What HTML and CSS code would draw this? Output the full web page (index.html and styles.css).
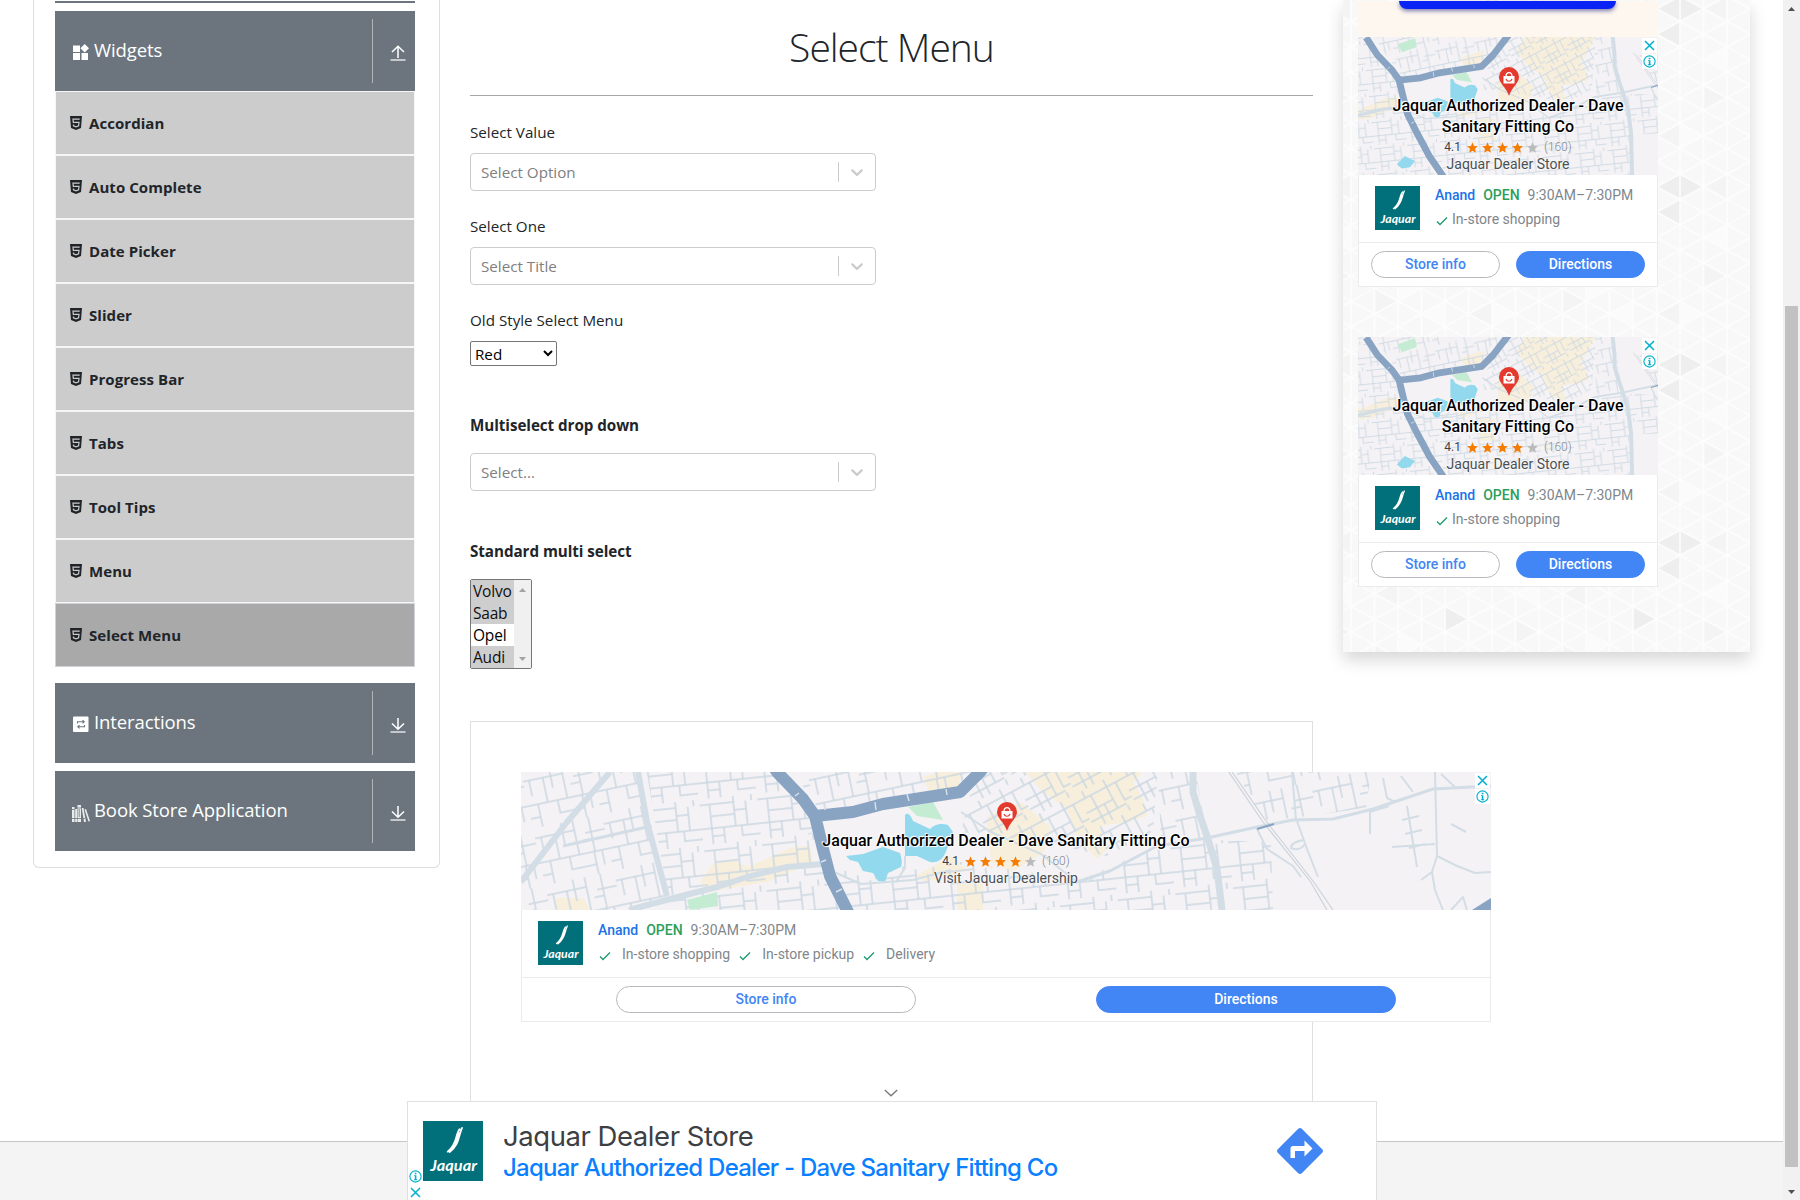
FILE: index.html
```
<!DOCTYPE html>
<html lang="en">
<head>
<meta charset="utf-8">
<title>Select Menu</title>
<link rel="stylesheet" href="styles.css">
</head>
<body>
<svg class="defs" width="0" height="0">
  <defs>
    <pattern id="st1" width="70" height="58" patternUnits="userSpaceOnUse" patternTransform="rotate(-12)"><path class="street" d="M0 10H40M40 0V35M0 35H70M20 10V35M55 35V58M10 35V58M50 15H70M56 0V35M30 35V48H55M0 48H10M28 0V22M6 10V26M46 22H56M63 35V50"/></pattern>
    <pattern id="st2" width="48" height="40" patternUnits="userSpaceOnUse" patternTransform="rotate(-28)"><path class="street" d="M0 8H48M0 22H30M12 8V40M30 0V32M40 8V28H48M0 32H40M20 22V40M6 0V8M40 34V40"/></pattern>
    <pattern id="st3" width="58" height="46" patternUnits="userSpaceOnUse" patternTransform="rotate(-6)"><path class="street" d="M0 6H34M10 6V46M34 0V30M10 18H34M0 30H58M46 6V30M34 14H46M22 30V46M40 30V40H58M10 38H22M52 0V6"/></pattern>
    <g id="map-art">
      <rect x="0" y="-60" width="970" height="300" fill="#f4f2f4"/>
      <g fill="#f7efdc">
        <path d="M192 92L212 87L226 95L252 84L272 75L289 74L292 90L246 110L186 120L179 110Z"/>
        <path d="M516 -35L640 -35L622 0L612 10L622 27L626 44L606 50L579 54L586 77L576 87L556 64L546 37L522 20L500 -5Z"/>
        <path d="M466 45L500 30L530 55L523 80L490 100L470 90Z"/>
        <path d="M402 5L444 -8L436 18L408 20Z"/><path d="M395 104L430 84L446 98L405 110Z"/><path d="M436 112H462V150H436Z"/><path d="M35 126H62L70 138H35Z"/>
      </g>
      <path fill="url(#st1)" d="M0 0H119L146 125L112 138H0Z"/>
      <path fill="url(#st3)" d="M119 -40H230L292 42L304 92L330 150L360 220H150L146 120Z"/>
      <path fill="url(#st1)" d="M240 -45H480L450 16L300 40Z"/>
      <path fill="url(#st2)" d="M486 -45H640L632 60L586 84L520 70L440 60L450 20Z"/>
      <path fill="url(#st3)" d="M310 100L440 90L560 108L640 72L686 68L701 138L704 220H370Z"/>
      <path fill="url(#st3)" d="M692 68L750 70L752 138H702Z"/>
      <path fill="url(#st1)" d="M635 -40H668L686 65L640 70Z"/>
      <path fill="url(#st1)" d="M715 0H850L845 36L772 46L742 48Z"/>
      <g fill="#c3ecd2"><path d="M387 35L412 30L422 48L396 44Z"/><path d="M166 128L196 120L197 134L169 138Z"/><path d="M292 -19L322 -30L325 -14L299 -5Z"/></g>
      <g fill="#92d9ee">
        <path d="M384 43Q388 39 392 49L409 57Q416 50 427 53L432 60L426 77Q421 92 409 90L396 84L384 84Z"/>
        <path d="M325 84L342 82L362 75L379 81Q382 90 380 95L367 101L364 110L357 109L352 101L342 99L337 90L329 88Z"/>
        <path d="M290 192L304 177L322 186L313 197L299 199Z"/>
      </g>
      <g fill="none" stroke="#d3dde6" stroke-linejoin="round">
        <path stroke-width="6" d="M89 0L46 50L0 110M117 0L126 50L146 124M108 138L149 127L196 115L226 105L266 95L302 92"/>
        <path stroke-width="7" d="M668 -40L672 0L672 20L679 44L687 67L696 97L701 138L703 220"/>
        <path stroke-width="3" d="M42 74L126 55M556 110L589 99L636 74L686 66L736 55L772 48L812 47L852 37L912 17L970 14"/>
        <path stroke-width="2" d="M914 0L916 84L936 94L954 101L970 100M916 84L911 100L914 118L922 138M849 62V40L868 34M886 34L896 95M881 48L898 44M884 62L901 58M888 76L904 72M871 75L914 72M736 57L746 77L772 94L780 105M776 49L786 77L797 105M783 68Q770 70 770 76Q778 80 784 72M771 0L775 48M440 40L470 60L520 82L556 110M375 110L384 96L384 84M304 96L340 112L392 108L430 98M920 2L935 16M862 6L866 26L874 30M880 4L892 20M930 52L945 60M900 108L911 100M930 138L942 125L946 138"/>
      </g>
      <path fill="none" stroke="#ccd3da" stroke-width="1.2" d="M705 -4L742 50L789 109L806 138M711 0L745 49L792 109L812 138"/>
      <g fill="none" stroke="#89a3c3" stroke-width="12" stroke-linejoin="round">
        <path d="M236 -31L256 0L282 27L294 44L302 77L309 104L326 138L348 179L372 214M294 44L332 40L362 32L439 20L459 0L486 -35"/>
        <path stroke-width="2" d="M736 57L753 52"/>
      </g>
      <path fill="none" stroke="#d9e3ec" stroke-width="1.4" d="M274 24L278 21M287 62L291 61M300 90L305 88M304 38V35M354 30L355 38M386 22L388 29M425 17L426 23M315 120L321 117"/>
      <path fill="#89a3c3" d="M951 138L970 126V138Z"/>
    </g>
    <symbol id="pin" viewBox="0 0 20 29"><path fill="#e43a2e" d="M10 0A10 10 0 0 1 20 10C20 16 13 20 10 29C7 20 0 16 0 10A10 10 0 0 1 10 0Z"/><path fill="#fff" d="M4.500 9H15.500V16.500H4.500Z"/><path fill="none" stroke="#fff" stroke-width="1.300" d="M7 9.500C7 4.300 13 4.300 13 9.500"/><path fill="none" stroke="#e43a2e" stroke-width="1.200" d="M7 12C8 15 12 15 13 12"/></symbol>
    <symbol id="star" viewBox="2 1.500 20 20"><path d="M12 17.270L18.180 21L16.540 13.970L22 9.240L14.810 8.630L12 2L9.190 8.630L2 9.240L7.460 13.970L5.820 21Z"/></symbol>
    <symbol id="x" viewBox="0 0 15 15"><path fill="none" stroke="#00aecd" stroke-width="1.500" d="M3 3L12 12M12 3L3 12"/></symbol>
    <symbol id="info" viewBox="0 0 15 15"><circle cx="7.500" cy="7.500" r="5.600" fill="none" stroke="#00aecd" stroke-width="1.100"/><path fill="#00aecd" d="M6.700 3.800H8.400V5.200H6.700ZM6 6.200H8.400V10.300H9.200V11.200H5.900V10.300H6.800V7.100H6Z"/></symbol>
    <symbol id="check" viewBox="0 0 12 10"><path fill="none" stroke="#1e9b6c" stroke-width="1.300" d="M1 5.500L4 8.500L11 1.500"/></symbol>
    <symbol id="jaquar" viewBox="0 0 45 44" preserveAspectRatio="none"><rect width="45" height="44" fill="#02707a"/><path fill="none" stroke="#fff" stroke-width="1.300" stroke-linecap="round" d="M27.500 6C24 10 26 17 18.500 22.500M29.300 5C26.500 11 27.500 17 20 22.800M27.200 9C25.500 13 26 17 22 20.500"/><text x="5.500" y="36.500" textLength="35" lengthAdjust="spacingAndGlyphs" font-family="Lato, sans-serif" font-style="italic" font-weight="700" font-size="11.500" fill="#fff">Jaquar</text></symbol>
    <symbol id="html5" viewBox="0 0 12 14"><path fill="#212529" d="M0 0H12L11 12L6 14L1 12Z"/><path fill="none" stroke="#ccc" stroke-width="1.200" d="M9.700 3.200H3L3.300 6.300H9L8.600 9.900L6 10.800L3.500 9.900L3.400 8.500"/></symbol>
    <symbol id="chev" viewBox="0 0 20 20"><path fill="#ccc" d="M4.516 7.548c0.436-0.446 1.043-0.481 1.576 0l3.908 3.747 3.908-3.747c0.533-0.481 1.141-0.446 1.574 0 0.436 0.445 0.408 1.197 0 1.615-0.406 0.418-4.695 4.502-4.695 4.502-0.217 0.223-0.502 0.335-0.787 0.335s-0.570-0.112-0.789-0.335c0 0-4.287-4.084-4.695-4.502s-0.436-1.170 0-1.615z"/></symbol>
    <symbol id="down" viewBox="0 0 16 16"><path fill="none" stroke="#fff" stroke-width="1.500" d="M8 1V12M2 6.500L8 12.300L14 6.500"/><path stroke="#dcdfe1" stroke-width="1.600" d="M.5 15H15.500"/></symbol>
    <symbol id="up" viewBox="0 0 16 16"><path fill="none" stroke="#fff" stroke-width="1.500" d="M8 13V1.500M2 7L8 1.200L14 7"/><path stroke="#dcdfe1" stroke-width="1.600" d="M.5 15H15.500"/></symbol>
    <pattern id="mesh" width="47" height="25.430" patternUnits="userSpaceOnUse" patternTransform="translate(-39 -4)"><path fill="none" stroke="#fdfdfd" stroke-width="1.600" d="M0 0V26M23.500 0V26M47 0V26M0 0L47 25.430M0 25.430L47 0"/></pattern>
    <pattern id="tris" width="188" height="178" patternUnits="userSpaceOnUse" patternTransform="translate(-39 -4)">
      <path fill="#eeeeee" d="M188 0L164.500 12.700L188 25.400ZM0 0L23.500 12.700L0 25.400ZM188 25.400L164.500 38.100L188 50.900ZM141 76.300L164.500 89L141 101.700Z"/>
      <path fill="#f4f4f4" d="M47 0L23.500 12.700L47 25.400ZM94 50.900L70.500 63.600L94 76.300ZM70.500 114.400L94 127L70.500 139.800ZM117.500 12.700L141 25.400L117.500 38.100ZM23.500 89L47 101.700L23.500 114.400ZM188 127L164.500 139.800L188 152.600Z"/>
      <path fill="#fbfbfb" d="M47 50.900L23.500 63.600L47 76.300ZM94 101.700L117.500 114.400L94 127ZM0 127L23.500 139.800L0 152.600ZM141 127L117.500 139.800L141 152.600ZM94 0L70.500 12.700L94 25.400Z"/>
    </pattern>
  </defs>
</svg>

<div class="window">
  <div class="page">
    <div class="columns">
      <nav class="sidebar">
        <div class="group stub"></div>
        <div class="group"><svg class="gicon" viewBox="0 0 16 16"><path fill="#fff" d="M0 1.500H7V8H0ZM0 9H7V16H0ZM8.500 9H15V16H8.500ZM11.700 0L16 4.300L11.700 8.600L7.400 4.300Z"/></svg><span class="gname">Widgets</span><span class="toggle"><svg><use href="#up"/></svg></span></div>
        <ul class="items">
          <li><svg><use href="#html5"/></svg><span>Accordian</span></li>
          <li><svg><use href="#html5"/></svg><span>Auto Complete</span></li>
          <li><svg><use href="#html5"/></svg><span>Date Picker</span></li>
          <li><svg><use href="#html5"/></svg><span>Slider</span></li>
          <li><svg><use href="#html5"/></svg><span>Progress Bar</span></li>
          <li><svg><use href="#html5"/></svg><span>Tabs</span></li>
          <li><svg><use href="#html5"/></svg><span>Tool Tips</span></li>
          <li><svg><use href="#html5"/></svg><span>Menu</span></li>
          <li class="active"><svg><use href="#html5"/></svg><span>Select Menu</span></li>
        </ul>
        <div class="group"><svg class="gicon" viewBox="0 0 16 16"><rect y=".5" width="15.500" height="15.500" rx="1" fill="#fff"/><path fill="none" stroke="#6c757d" stroke-width="1.100" d="M4.500 7.500V5.800H10.500M9.500 4.200L11.200 5.800L9.500 7.400M11.500 9V10.700H5.500M6.500 9.100L4.800 10.700L6.500 12.300"/></svg><span class="gname">Interactions</span><span class="toggle"><svg><use href="#down"/></svg></span></div>
        <div class="group"><svg class="gicon books" viewBox="0 0 18 17"><path fill="#e9ebec" d="M0 2H2.500V17H0ZM3.200 4H5V17H3.200ZM5.500 0H9V17H5.500ZM9.700 3L11.500 3L14 17H12ZM12.500 4.500L14 4L18 16L16.500 16.600Z"/><path stroke="#6c757d" stroke-width=".8" d="M0 13.500H13M5.500 3H9M0 4.500H2.500M7.200 4V12"/></svg><span class="gname">Book Store Application</span><span class="toggle"><svg><use href="#down"/></svg></span></div>
      </nav>

      <main class="main">
        <h1>Select Menu</h1>
        <label class="lbl">Select Value</label>
        <div class="rs"><span>Select Option</span><i></i><svg><use href="#chev"/></svg></div>
        <label class="lbl">Select One</label>
        <div class="rs"><span>Select Title</span><i></i><svg><use href="#chev"/></svg></div>
        <label class="lbl">Old Style Select Menu</label>
        <select class="old"><option>Red</option></select>
        <b class="lbl multi">Multiselect drop down</b>
        <div class="rs"><span>Select...</span><i></i><svg><use href="#chev"/></svg></div>
        <b class="lbl std">Standard multi select</b>
        <div class="listbox">
          <div class="opts"><div class="on">Volvo</div><div class="on">Saab</div><div>Opel</div><div class="on">Audi</div></div>
          <div class="lbar"><svg viewBox="0 0 17 88"><path fill="#a3a3a3" d="M5 12L8.500 8L12 12ZM5 77L8.500 81L12 77Z"/></svg></div>
        </div>
        <div class="adframe">
          <section class="ad wide">
            <div class="map">
              <svg class="mapsvg" viewBox="0 0 970 138"><use href="#map-art"/></svg>
              <div class="choices"><svg><use href="#x"/></svg><svg><use href="#info"/></svg></div>
              <div class="over"><svg class="pin"><use href="#pin"/></svg><div class="shop">Jaquar Authorized Dealer - Dave Sanitary Fitting Co</div>
              <div class="rate">4.1<span class="stars"><svg><use href="#star"/></svg><svg><use href="#star"/></svg><svg><use href="#star"/></svg><svg><use href="#star"/></svg><svg class="off"><use href="#star"/></svg></span><em>(160)</em></div>
              <div class="kind">Visit Jaquar Dealership</div></div>
            </div>
            <div class="info"><svg class="logo"><use href="#jaquar"/></svg><div><p><b class="city">Anand</b><b class="open">OPEN</b><span>9:30AM–7:30PM</span></p><p class="perks"><svg><use href="#check"/></svg><span>In-store shopping</span><svg><use href="#check"/></svg><span>In-store pickup</span><svg><use href="#check"/></svg><span>Delivery</span></p></div></div>
            <div class="btns"><a>Store info</a><a class="fill">Directions</a></div>
          </section>
        </div>
      </main>

      <aside class="rail">
        <svg class="railbg"><rect width="407" height="652" fill="#f8f8f8"/><rect width="407" height="652" fill="url(#tris)"/><rect width="407" height="652" fill="url(#mesh)"/></svg>
        <div class="promo"><div class="cta"></div></div>
        <section class="ad">
          <div class="map">
            <svg class="mapsvg" viewBox="0 0 300 138"><use href="#map-art" transform="translate(-126.500 18) scale(.57)"/></svg>
            <div class="choices"><svg><use href="#x"/></svg><svg><use href="#info"/></svg></div>
            <div class="over"><svg class="pin"><use href="#pin"/></svg><div class="shop">Jaquar Authorized Dealer - Dave<br>Sanitary Fitting Co</div>
            <div class="rate">4.1<span class="stars"><svg><use href="#star"/></svg><svg><use href="#star"/></svg><svg><use href="#star"/></svg><svg><use href="#star"/></svg><svg class="off"><use href="#star"/></svg></span><em>(160)</em></div>
            <div class="kind">Jaquar Dealer Store</div></div>
          </div>
          <div class="info"><svg class="logo"><use href="#jaquar"/></svg><div><p><b class="city">Anand</b><b class="open">OPEN</b><span>9:30AM–7:30PM</span></p><p class="perks"><svg><use href="#check"/></svg><span>In-store shopping</span></p></div></div>
          <div class="btns"><a>Store info</a><a class="fill">Directions</a></div>
        </section>
        <section class="ad">
          <div class="map">
            <svg class="mapsvg" viewBox="0 0 300 138"><use href="#map-art" transform="translate(-126.500 18) scale(.57)"/></svg>
            <div class="choices"><svg><use href="#x"/></svg><svg><use href="#info"/></svg></div>
            <div class="over"><svg class="pin"><use href="#pin"/></svg><div class="shop">Jaquar Authorized Dealer - Dave<br>Sanitary Fitting Co</div>
            <div class="rate">4.1<span class="stars"><svg><use href="#star"/></svg><svg><use href="#star"/></svg><svg><use href="#star"/></svg><svg><use href="#star"/></svg><svg class="off"><use href="#star"/></svg></span><em>(160)</em></div>
            <div class="kind">Jaquar Dealer Store</div></div>
          </div>
          <div class="info"><svg class="logo"><use href="#jaquar"/></svg><div><p><b class="city">Anand</b><b class="open">OPEN</b><span>9:30AM–7:30PM</span></p><p class="perks"><svg><use href="#check"/></svg><span>In-store shopping</span></p></div></div>
          <div class="btns"><a>Store info</a><a class="fill">Directions</a></div>
        </section>
      </aside>
    </div>
    <footer class="footer"></footer>

    <div class="anchor">
      <svg class="collapse" viewBox="0 0 14 8"><path fill="none" stroke="#777" stroke-width="1.300" d="M.8 1L7 6.800L13.200 1"/></svg>
      <div class="banner">
        <div class="marks"><svg><use href="#info"/></svg><svg><use href="#x"/></svg></div>
        <svg class="blogo"><use href="#jaquar"/></svg>
        <div class="btext"><div class="bt1">Jaquar Dealer Store</div><div class="bt2">Jaquar Authorized Dealer - Dave Sanitary Fitting Co</div></div>
        <svg class="route" viewBox="0 0 46 46"><path fill="#4285f4" d="M21.200 .8Q23 -.7 24.800 .8L45.200 21.200Q46.700 23 45.200 24.800L24.800 45.200Q23 46.700 21.200 45.200L.8 24.800Q-.7 23 .8 21.200Z"/><path fill="#fff" d="M13.500 30V20.500Q13.500 18 16 18H27.500V12.500L35.500 20.500L27.500 28.500V23H18V30Z"/></svg>
      </div>
    </div>
  </div>
  <div class="scroll"><svg viewBox="0 0 17 6"><path fill="#505050" d="M5 5L8.500 1L12 5Z"/></svg><div class="thumb"></div><svg viewBox="0 0 17 6"><path fill="#505050" d="M5 1L8.500 5L12 1Z"/></svg></div>
</div>
</body>
</html>
```
FILE: styles.css
```
* { box-sizing: border-box; }
body { margin: 0; background: #fff; color: #212529; font-family: "Open Sans", "Noto Sans", sans-serif; font-size: 15px; overflow: hidden; }
svg { display: block; flex: none; }
.defs { position: absolute; }
.street { fill: none; stroke: #cbd7e2; stroke-width: 1.5; }
.window { display: flex; width: 1800px; height: 1200px; overflow: hidden; }
.page { position: relative; width: 1783px; height: 1200px; overflow: hidden; }
.columns { display: flex; align-items: flex-start; height: 1141px; padding-left: 33px; }

/* left navigation */
.sidebar { width: 407px; height: 868px; padding: 0 24px 0 21px; border: 1px solid #dcdee0; border-top: 0; border-radius: 0 0 6px 6px; }
.group { display: flex; align-items: center; height: 80px; margin-bottom: 8px; padding-left: 18px; background: #6c757d; color: #fff; }
.group.stub { height: 2px; margin: 1px 0 8px; }
.gicon { width: 16px; height: 16px; margin-top: 2px; }
.gicon.books { width: 18px; height: 17px; margin: 5px -1px 0 -1px; }
.gname { flex: 1; padding: 0 0 3px 5px; font-size: 18.5px; letter-spacing: -.1px; }
.toggle { display: flex; align-items: center; width: 43px; height: 64px; padding: 3px 0 0 17px; border-left: 1px solid #b3b5b5; }
.toggle svg { width: 16px; height: 16px; }
.items { margin: -8px 0 16px; padding: 0; list-style: none; }
.items li { display: flex; align-items: center; height: 64px; padding: 0 14px; gap: 7px; border: 1px solid #f6f6f6; background: #ccc; font-size: 15px; font-weight: 700; letter-spacing: .06px; }
.items li.active { background: #a9a9a9; border-color: #d0d3d8; }
.items svg { width: 12px; height: 14px; margin-top: -1px; }

/* form column */
.main { display: flex; flex-direction: column; align-items: flex-start; width: 843px; margin-left: 30px; }
h1 { width: 843px; height: 96px; margin: 0 0 24px; padding-top: 19px; border-bottom: 1px solid #a6a7a9; text-align: center; font-size: 39px; line-height: 56px; font-weight: 300; letter-spacing: -1px; }
.lbl { height: 33px; font-size: 15.200px; line-height: 25px; letter-spacing: 0; }
.rs { display: flex; align-items: center; width: 406px; height: 38px; margin-bottom: 23px; padding: 0 8px 0 10px; border: 1px solid #ccc; border-radius: 4px; color: #808080; font-size: 15.200px; letter-spacing: 0; }
.rs span { flex: 1; }
.rs i { width: 1px; height: 20px; margin-right: 8px; background: #ccc; }
.rs svg { width: 20px; height: 20px; }
.old { width: 87px; height: 25px; margin: 0 0 46px; padding: 0; border: 1px solid #767676; border-radius: 2px; background: #fff; font: 15.200px "Open Sans", sans-serif; color: #000; }
.multi { height: 41px; }
.multi + .rs { margin-bottom: 47px; }
.std { height: 41px; }
b.lbl { line-height: 26px; letter-spacing: -.05px; }
.listbox { display: flex; width: 62px; height: 90px; border: 1px solid #767676; border-radius: 2px; font-size: 15.500px; letter-spacing: -.2px; color: #000; }
.opts { width: 43px; }
.opts div { height: 22px; padding-left: 2px; line-height: 23px; }
.opts .on { background: #cecece; color: #101010; }
.lbar { width: 17px; background: #f0f0f0; }
.adframe { width: 843px; height: 420px; margin-top: 52px; padding: 50px; border: 1px solid #dfdfdf; }

/* store ads */
.ad { width: 300px; height: 250px; background: #fff; border: 1px solid #ebebef; border-top: 0; font-family: Roboto, sans-serif; font-size: 14px; color: #80868b; }
.map { position: relative; height: 138px; margin: 0 -1px; overflow: hidden; }
.mapsvg { width: 100%; height: 138px; }
.choices { position: absolute; top: 1px; right: 1px; display: grid; gap: 1px; }
.choices svg { width: 15px; height: 15px; background: #fff; }
.over { position: absolute; inset: 0; display: flex; flex-direction: column; align-items: center; text-align: center; padding-top: 30px; }
.pin { width: 20px; height: 29px; margin-left: 1px; }
.shop { margin-top: -1px; color: #000; font-size: 16px; font-weight: 500; line-height: 21px; letter-spacing: .02px; text-shadow: 0 0 2px #fff, 0 0 2px #fff, 1px 1px 0 #fff, -1px -1px 0 #fff; }
.rate { display: flex; align-items: center; height: 18px; margin-top: 1px; font-size: 12px; color: #3c4043; text-shadow: 0 0 2px #fff; }
.stars { display: flex; gap: 4px; margin: 0 6px 0 6px; }
.stars svg { width: 11px; height: 11px; fill: #f57c00; }
.stars .off { fill: #bbb; }
.rate em { font-style: normal; font-weight: 300; color: #80868b; }
.kind { color: #4b4f52; line-height: 17px; text-shadow: 0 0 2px #fff, 0 0 2px #fff; }
.info { display: flex; gap: 15px; height: 67px; padding: 11px 0 0 16px; }
.logo { width: 45px; height: 44px; }
.info p { display: flex; height: 24px; margin: 0; line-height: 18px; }
.info b { margin-right: 8px; font-weight: 500; }
.city { color: #1a73e8; }
.open { color: #2e9e5b; }
.info .perks { align-items: center; height: 18px; }
.perks svg { width: 12px; height: 10px; margin: 3px 4px 0 1px; }
.btns { display: flex; justify-content: center; gap: 16px; height: 44px; padding-top: 8px; border-top: 1px solid #ebebef; }
.btns a { width: 129px; height: 27px; border: 1px solid #b7b9be; border-radius: 14px; text-align: center; line-height: 25px; font-weight: 500; color: #4285f4; }
.btns .fill { background: #4285f4; border-color: #4285f4; color: #fff; }
.wide { width: 970px; position: relative; }
.wide .perks svg { margin: 3px 11px 0 1px; }
.wide .perks svg:not(:first-child) { margin-left: 9px; }
.wide .btns { gap: 180px; }
.wide .btns a { width: 300px; }

/* right rail */
.rail { position: relative; width: 407px; height: 652px; margin-left: 30px; padding: 1px 0 0 15px; box-shadow: 0 8px 16px rgba(0,0,0,.16); }
.railbg { position: absolute; left: 0; top: 0; width: 407px; height: 652px; }
.promo { position: relative; width: 300px; height: 36px; background: #fdf7ef; }
.cta { width: 217px; height: 8px; margin: 0 auto; background: #0a23f5; border-radius: 0 0 8px 8px; box-shadow: 0 2px 4px rgba(0,0,120,.5); position: relative; left: -1px; }
.rail .ad { position: relative; margin-bottom: 50px; }

.footer { height: 59px; background: #f4f4f4; border-top: 1px solid #c4c6c8; }

/* anchored banner */
.anchor { position: absolute; left: 407px; bottom: 0; width: 970px; }
.collapse { width: 14px; height: 8px; margin: 0 0 4px 477px; }
.banner { display: flex; height: 99px; border: 1px solid #dfe0e1; border-bottom: 0; background: #fff; }
.marks { display: flex; flex-direction: column; gap: 1px; width: 15px; padding-top: 67px; }
.marks svg { width: 15px; height: 15px; }
.blogo { width: 60px; height: 60px; margin-top: 19px; }
.btext { flex: 1; padding: 16px 0 0 20px; font-family: Inter, sans-serif; white-space: nowrap; }
.bt1 { height: 35px; font-size: 27.500px; line-height: 36px; letter-spacing: -.45px; color: #3c4043; }
.bt2 { font-size: 24px; line-height: 30px; letter-spacing: -.75px; color: #0b80ff; font-weight: 500; }
.route { width: 46px; height: 46px; margin: 26px 53px 0 0; }

/* window scrollbar */
.scroll { display: flex; flex-direction: column; width: 17px; height: 1200px; padding: 6px 0 5px; background: #f1f1f1; }
.scroll svg { width: 17px; height: 6px; }
.thumb { width: 13px; height: 861px; margin: 294px 2px auto; background: #c1c1c1; }
```
